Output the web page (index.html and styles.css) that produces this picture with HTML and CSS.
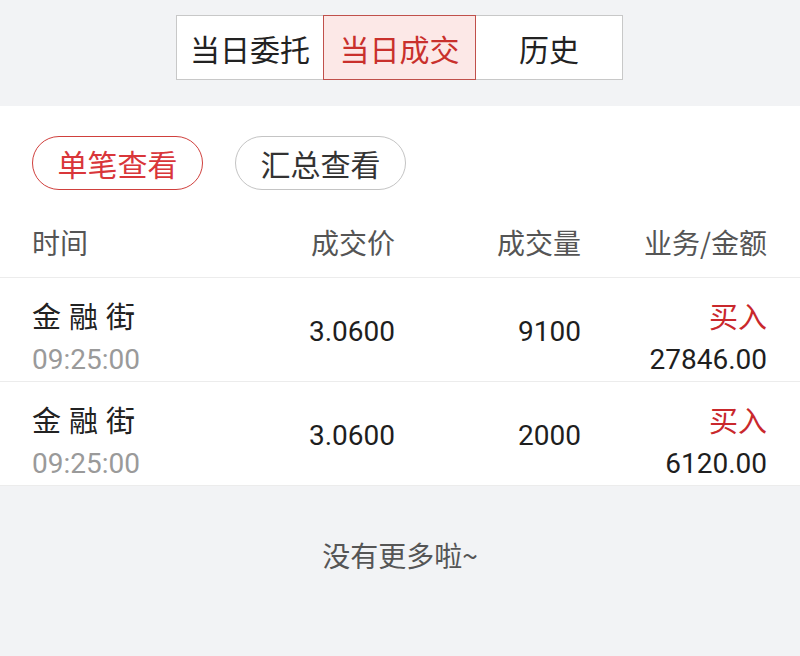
FILE: index.html
```html
<!DOCTYPE html>
<html>
<head>
    <meta charset="utf-8">
    <title>当日成交</title>
    <link rel="stylesheet" href="styles.css">
</head>
<body>

<div class="top">
    <div class="tabs">
        <div class="tab">当日委托</div>
        <div class="tab active">当日成交</div>
        <div class="tab">历史</div>
    </div>
</div>

<div class="panel">
    <div class="pills">
        <span class="pill on">单笔查看</span>
        <span class="pill">汇总查看</span>
    </div>

    <div class="row head">
        <div>时间</div>
        <div class="r">成交价</div>
        <div class="r">成交量</div>
        <div class="r">业务/金额</div>
    </div>

    <div class="row item">
        <div>
            <div class="name">金融街</div>
            <div class="time num">09:25:00</div>
        </div>
        <div class="r num">3.0600</div>
        <div class="r num">9100</div>
        <div class="r">
            <div class="biz">买入</div>
            <div class="num amt">27846.00</div>
        </div>
    </div>

    <div class="row item">
        <div>
            <div class="name">金融街</div>
            <div class="time num">09:25:00</div>
        </div>
        <div class="r num">3.0600</div>
        <div class="r num">2000</div>
        <div class="r">
            <div class="biz">买入</div>
            <div class="num amt">6120.00</div>
        </div>
    </div>
</div>

<div class="more">没有更多啦~</div>

</body>
</html>
```

FILE: styles.css
```css
html, body{ margin: 0;padding: 0;}
body{
    background: #f2f3f5;
    font-family: "Noto Sans CJK SC", "Noto Sans", sans-serif;
    color: #222;
    width: 800px;
}
.top{ height: 106px;padding-top: 15px;box-sizing: border-box;}
.tabs{
    display: flex;
    width: 447px;
    height: 65px;
    margin: 0 auto 0 176px;
    background: #FFF;
    border: solid 1px #c8c8c8;
    box-sizing: border-box;
}
.tab{
    flex: 1;
    display: flex;
    align-items: center;
    justify-content: center;
    font-size: 30px;
    color: #222;
}
.tab.active{
    flex: 0 0 151px;
    margin: -1px 0;
    color: #c9302c;
    background: #fce8e7;
    border: solid 1px #c0504b;
}

.panel{ background: #FFF;padding-top: 30px;}
.pills{ display: flex;gap: 32px;padding-left: 32px;}
.pill{
    display: flex;
    align-items: center;
    justify-content: center;
    width: 171px;
    height: 54px;
    box-sizing: border-box;
    border: solid 1px #c4c4c4;
    border-radius: 27px;
    font-size: 30px;
    color: #333;
}
.pill.on{ color: #d9363a;border-color: #d0403d;}

.row{
    display: grid;
    grid-template-columns: 177px 186px 186px 186px;
    padding: 0 33px 0 32px;
    border-bottom: solid 1px #ececec;
}
.row .r{ text-align: right;}
.head{ margin-top: 32px;padding-bottom: 15px;font-size: 28px;line-height: 40px;color: #555;}
.item{ height: 104px;box-sizing: border-box;padding-top: 18px;align-items: start;}
.item > .num{ align-self: center;margin-top: -16px;}
.num{ font-family: Roboto, "Liberation Sans", sans-serif;font-size: 28px;color: #1e1e1e;}
.name{ font-size: 29px;line-height: 38px;letter-spacing: 8px;}
.time{ color: #9a9a9a;line-height: 44px;margin-top: 4px;}
.biz{ font-size: 29px;line-height: 38px;color: #c9282c;}
.amt{ line-height: 44px;margin-top: 4px;}

.more{ text-align: center;font-size: 28px;color: #555;padding-top: 49px;line-height: 40px;}
```
